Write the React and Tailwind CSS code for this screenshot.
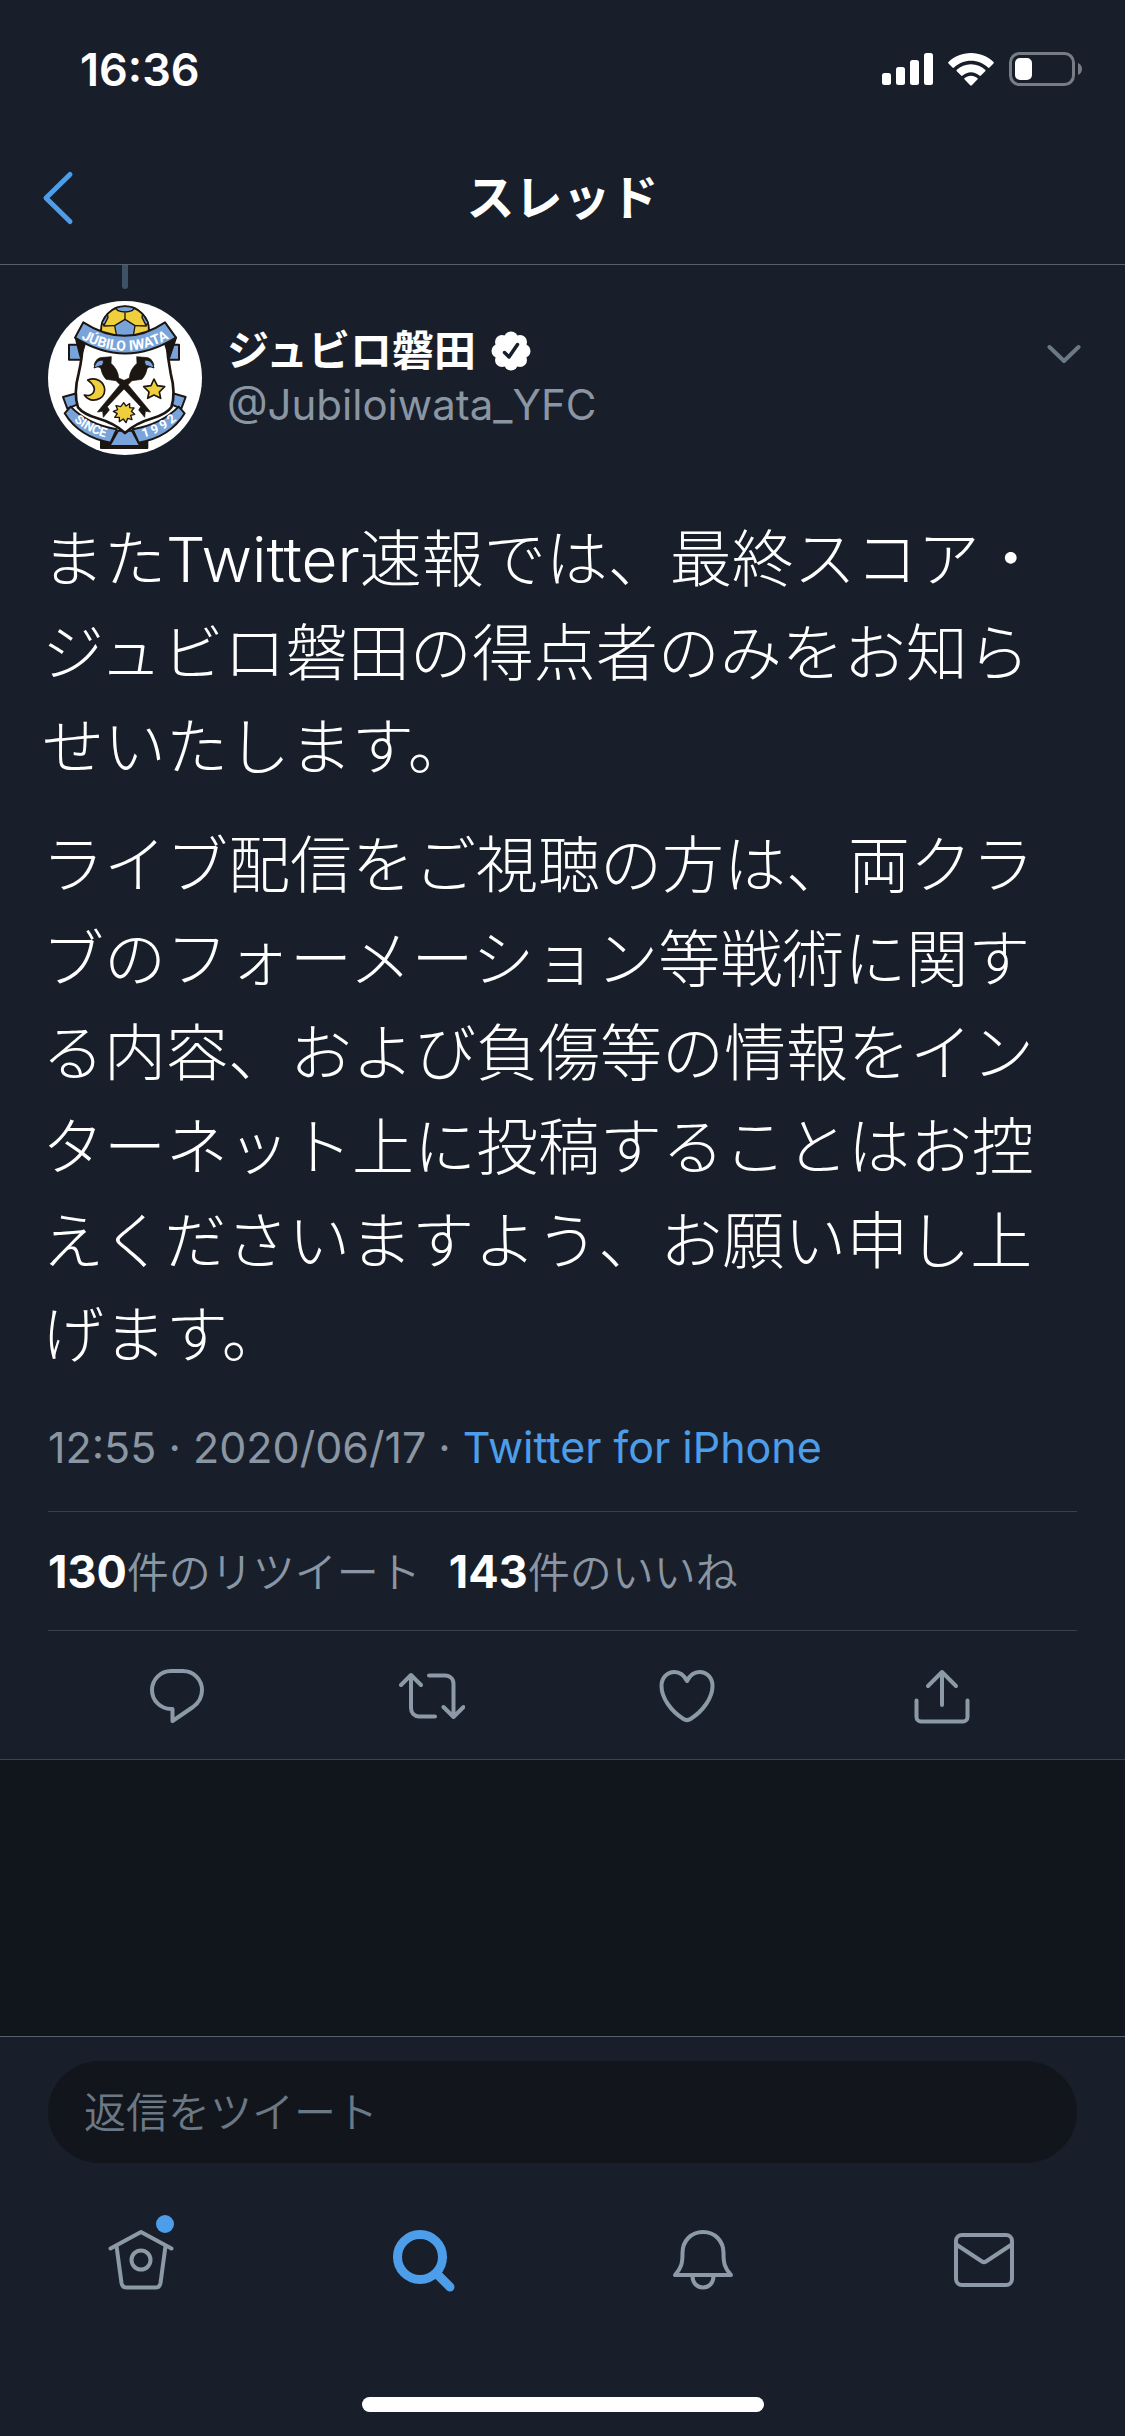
import React, { useState } from "react";

const paragraphs = [
  "またTwitter速報では、最終スコア・ジュビロ磐田の得点者のみをお知らせいたします。",
  "ライブ配信をご視聴の方は、両クラブのフォーメーション等戦術に関する内容、および負傷等の情報をインターネット上に投稿することはお控えくださいますよう、お願い申し上げます。",
];

const StatusBar = () => (
  <div className="flex h-[132px] items-center justify-between pl-20 pr-[42px] pt-1.5">
    <span className="text-[45px] font-semibold leading-none text-white">
      16:36
    </span>
    <div className="flex items-center gap-[15px]">
      <svg width="51" height="32" viewBox="0 0 51 32" fill="#fff">
        <rect x="0" y="20" width="9" height="12" rx="2.5" />
        <rect x="14" y="14" width="9" height="18" rx="2.5" />
        <rect x="28" y="7" width="9" height="25" rx="2.5" />
        <rect x="42" y="0" width="9" height="32" rx="2.5" />
      </svg>
      <svg width="46" height="33" viewBox="0 0 46 33" fill="#fff">
        <path d="M23 0C14 0 6 3.500 0.500 9c-.5.5-.5 1 0 1.500l4 4c.5.500 1 .500 1.500 0C10.500 10.200 16.500 7.700 23 7.700s12.500 2.500 17 6.800c.5.500 1 .500 1.500 0l4-4c.5-.500.5-1 0-1.500C40 3.500 32 0 23 0z" />
        <path d="M23 11.200c-5.500 0-10.500 2.100-14.200 5.600-.5.500-.5 1 0 1.500l4.300 4.300c.5.500 1 .500 1.500 0 2.300-2.100 5.200-3.400 8.400-3.400s6.100 1.300 8.400 3.400c.5.500 1 .500 1.500 0l4.300-4.300c.5-.500.5-1 0-1.500-3.700-3.500-8.700-5.600-14.200-5.600z" />
        <path d="M23 22.700c-2.500 0-4.700.9-6.400 2.400-.5.500-.5 1 0 1.500l5.600 5.700c.5.500 1.100.500 1.600 0l5.600-5.700c.5-.5.5-1 0-1.500-1.700-1.500-3.900-2.400-6.400-2.400z" />
      </svg>
      <svg width="74" height="34" viewBox="0 0 74 34">
        <rect
          x="1.500"
          y="1.500"
          width="63"
          height="31"
          rx="9"
          fill="none"
          stroke="#787c84"
          strokeWidth="3"
        />
        <path d="M69 11v12c2.400-1 4-3.300 4-6s-1.600-5-4-6z" fill="#787c84" />
        <rect x="6" y="6" width="17" height="22" rx="5" fill="#fff" />
      </svg>
    </div>
  </div>
);

const Crest = () => (
  <svg
    className="size-[154px] shrink-0 rounded-full bg-white"
    viewBox="54 123 462 462"
    role="img"
    aria-label="ジュビロ磐田"
    stroke="#1c1612"
    strokeWidth="6"
    strokeLinejoin="round"
  >
    <defs>
      <path id="crest-top" d="M140 228 Q285 315 430 228" />
      <path id="crest-since" d="M114 464 Q160 519 250 538" />
      <path id="crest-year" d="M318 538 Q408 519 456 464" />
    </defs>
    {/* ball */}
    <circle cx="285" cy="211" r="72" fill="#efcf3c" />
    <path d="M256 144Q285 134 314 144L306 152Q285 160 264 152z" fill="#79a4db" strokeWidth="4" />
    <path d="M285 178L315 197L308 240H262L254 197z" fill="#79a4db" strokeWidth="4" />
    <path d="M232 162L216 188L222 196L234 172z" fill="#79a4db" strokeWidth="4" />
    <path d="M338 162L354 188L348 196L336 172z" fill="#79a4db" strokeWidth="4" />
    <path d="M285 158V178M254 197L220 198M315 197L350 198" fill="none" strokeWidth="4" />
    {/* side tabs */}
    <path d="M117 254H160V299H117z" fill="#79a4db" />
    <path d="M410 254H447V299H410z" fill="#79a4db" />
    <path d="M99 411L140 400L150 430L112 446z" fill="#79a4db" />
    <path d="M467 411L428 400L416 430L454 446z" fill="#79a4db" />
    {/* foot */}
    <path d="M213 530H352V564H213z" fill="#1c1612" />
    <path d="M264 512H306L331 558H238z" fill="#79a4db" />
    {/* shield */}
    <path
      d="M158 240Q158 290 146 340Q130 400 144 442Q160 462 200 474Q255 490 285 519Q315 490 370 474Q410 462 424 442Q438 400 422 340Q412 290 410 240z"
      fill="#fff"
      strokeWidth="8"
    />
    <path d="M137 233L164 254L152 292z" fill="#1c1612" />
    <path d="M438 233L406 254L418 292z" fill="#1c1612" />
    {/* top ribbon */}
    <path d="M160 187Q285 268 405 187L438 233Q285 328 135 233z" fill="#79a4db" />
    {/* bottom ribbons */}
    <path d="M122 440Q172 492 260 508L242 548Q148 532 104 460z" fill="#79a4db" />
    <path d="M446 440Q396 492 308 508L326 548Q420 532 464 460z" fill="#79a4db" />
    {/* moon */}
    <path
      d="M173 360C200 350 224 366 224 391C224 420 182 432 163 405C190 412 209 386 173 360z"
      fill="#efcf3c"
      strokeWidth="5"
    />
    {/* star */}
    <path
      d="M372 357L382 377L404 380L388 396L392 415L372 405L353 415L357 396L341 380L363 377z"
      fill="#efcf3c"
      strokeWidth="5"
    />
    {/* birds */}
    <g id="bird">
      <path
        d="M192 316Q198 290 222 292L244 290L243 310Q264 328 266 354L284 362L362 456L346 454L344 472L326 450L332 440L268 372L258 362L228 358Q216 346 212 324z"
        fill="#1c1612"
        strokeWidth="2"
      />
      <path d="M192 324Q198 298 220 300Q222 318 209 318z" fill="#79a4db" strokeWidth="3" />
    </g>
    <use href="#bird" transform="translate(564 0) scale(-1 1)" />
    {/* sun */}
    <path
      d="M281 428L288 438L299 431L299 443L312 444L304 454L314 463L302 466L306 479L293 475L288 488L280 477L268 485L268 472L254 472L262 461L250 454L263 449L258 437L272 440z"
      fill="#efcf3c"
      strokeWidth="4"
    />
    <g
      fill="#fff"
      stroke="none"
      fontFamily="Roboto, sans-serif"
      fontWeight="700"
      textAnchor="middle"
    >
      <text fontSize="42">
        <textPath href="#crest-top" startOffset="50%">
          JÚBILO IWATA
        </textPath>
      </text>
      <text fontSize="38">
        <textPath href="#crest-since" startOffset="50%">
          SINCE
        </textPath>
      </text>
      <text fontSize="38">
        <textPath href="#crest-year" startOffset="50%">
          1 9 9 2
        </textPath>
      </text>
    </g>
  </svg>
);

const VerifiedBadge = () => (
  <svg width="40" height="40" viewBox="0 0 40 40" aria-label="認証済み">
    <g fill="#fff">
      <circle cx="20" cy="20" r="15" />
      <circle cx="20" cy="7.500" r="7" />
      <circle cx="20" cy="32.500" r="7" />
      <circle cx="7.500" cy="20" r="7" />
      <circle cx="32.500" cy="20" r="7" />
      <circle cx="11" cy="11" r="7" />
      <circle cx="29" cy="11" r="7" />
      <circle cx="11" cy="29" r="7" />
      <circle cx="29" cy="29" r="7" />
    </g>
    <path
      d="M13.500 21.500L18 26L26.500 13.500"
      fill="none"
      stroke="#191f2a"
      strokeWidth="3.500"
      strokeLinecap="round"
      strokeLinejoin="round"
    />
  </svg>
);

const LineIcon = ({ children }) => (
  <svg
    width="66"
    height="66"
    viewBox="0 0 66 66"
    fill="none"
    stroke="#8c99a6"
    strokeWidth="4"
    strokeLinecap="round"
    strokeLinejoin="round"
  >
    {children}
  </svg>
);

const actions = [
  {
    label: "返信",
    icon: (
      <path d="M27 8H39C49.500 8 58 16.500 58 27C58 34 54.500 40 49 44L28.500 58V46H27C16.500 46 8 37.500 8 27C8 16.500 16.500 8 27 8z" />
    ),
  },
  {
    label: "リツイート",
    icon: (
      <path d="M2 22L12 12L22 22M12 12V45C12 50 15.500 53.500 20 53.500H36M30 12.500H46C51 12.500 54.500 16 54.500 21V54M44.500 44L54.500 54L64.500 44" />
    ),
  },
  {
    label: "いいね",
    icon: (
      <path d="M33 18C30 12 26 9 20.500 9C12.500 9 7.500 15.500 7.500 23C7.500 35 17 48 29.500 56C32 57.600 34 57.600 36.500 56C49 48 58.500 35 58.500 23C58.500 15.500 53.500 9 45.500 9C40 9 36 12 33 18z" />
    ),
  },
  {
    label: "共有",
    icon: (
      <path d="M19 23L33 9L47 23M33 9V42M7.500 37.500V54C7.500 56.500 9.500 58.500 12 58.500H54C56.500 58.500 58.500 56.500 58.500 54V37.500" />
    ),
  },
];

const tabs = [
  {
    label: "ホーム",
    badge: true,
    icon: (
      <LineIcon>
        <path d="M2.500 21.500L33 5L63.500 21.500M8.500 19L13.500 56C14 59 15.500 60.500 18.500 60.500H47.500C50.500 60.500 52 59 52.500 56L57.500 19" />
        <circle cx="33" cy="33" r="9.500" />
      </LineIcon>
    ),
  },
  {
    label: "検索",
    icon: (
      <svg
        width="66"
        height="66"
        viewBox="0 0 66 66"
        fill="none"
        stroke="#4c9eeb"
        strokeWidth="9"
        strokeLinecap="round"
      >
        <circle cx="31" cy="30" r="22.500" />
        <path d="M47.500 46.500L61 60" />
      </svg>
    ),
  },
  {
    label: "通知",
    icon: (
      <LineIcon>
        <path d="M33 5C21 5 12.500 14 12.500 26C12.500 36 11.500 41 5 48H61C54.500 41 53.500 36 53.500 26C53.500 14 45 5 33 5zM22.500 49C22.500 56 27 60.500 33 60.500S43.500 56 43.500 49" />
      </LineIcon>
    ),
  },
  {
    label: "メッセージ",
    icon: (
      <LineIcon>
        <rect x="5" y="8" width="56" height="50" rx="6" />
        <path d="M6 18L31 34.500Q33 35.800 35 34.500L60 18" />
      </LineIcon>
    ),
  },
];

const App = () => {
  const [reply, setReply] = useState("");

  return (
    <div className="flex min-h-screen flex-col bg-[#191f2a] font-['Inter','Noto_Sans_CJK_JP',sans-serif] text-white">
      <header className="border-b border-[#56636e]">
        <StatusBar />
        <div className="grid h-[132px] grid-cols-3 items-center px-10">
          <button type="button" aria-label="戻る" className="justify-self-start">
            <svg
              width="36"
              height="56"
              viewBox="0 0 36 56"
              fill="none"
              stroke="#4c9eeb"
              strokeWidth="5"
              strokeLinecap="round"
              strokeLinejoin="round"
            >
              <path d="M30 4.500L6 28L30 51.500" />
            </svg>
          </button>
          <h1 className="text-center text-[48px] font-bold leading-none">
            スレッド
          </h1>
        </div>
      </header>

      <main className="flex flex-1 flex-col bg-[#11151c]">
        <article className="border-b border-[#38444d] bg-[#191f2a]">
          <div className="flex w-[250px] justify-center">
            <span className="h-6 w-1.5 rounded-b-full bg-[#3d5264]" />
          </div>
          <div className="flex items-start gap-[25px] pl-12 pr-11 pt-3">
            <Crest />
            <div className="flex flex-1 flex-col pt-5">
              <div className="flex h-[60px] items-center gap-[15px]">
                <span className="text-[42px] font-bold leading-none">
                  ジュビロ磐田
                </span>
                <VerifiedBadge />
              </div>
              <span className="text-[42px] leading-[48px] text-[#8a96a3]">
                @Jubiloiwata_YFC
              </span>
            </div>
            <button type="button" aria-label="メニュー" className="pt-10">
              <svg
                width="34"
                height="26"
                viewBox="0 0 34 26"
                fill="none"
                stroke="#6b7886"
                strokeWidth="4"
                strokeLinecap="round"
                strokeLinejoin="round"
              >
                <path d="M2.500 6L17 20L31.500 6" />
              </svg>
            </button>
          </div>

          <div className="flex flex-col gap-6 px-[42px] pt-[58px] text-[62px] font-light leading-[94px]">
            {paragraphs.map((text, index) => (
              <p key={index}>{text}</p>
            ))}
          </div>

          <div className="px-12">
            <p className="pb-9 pt-9 text-[43px] leading-[56px] text-[#8a96a3]">
              12:55 · 2020/06/17 ·{" "}
              <a href="#source" className="text-[#4c9eeb]">
                Twitter for iPhone
              </a>
            </p>
            <div className="flex h-[120px] items-center gap-7 border-y border-[#38404b] text-[42px] leading-none text-[#8a96a3]">
              <a href="#retweets">
                <b className="text-[45px] font-bold text-white">130</b>
                <span className="font-[350]">件のリツイート</span>
              </a>
              <a href="#likes">
                <b className="text-[45px] font-bold text-white">143</b>
                <span className="font-[350]">件のいいね</span>
              </a>
            </div>
          </div>

          <div className="grid h-32 grid-cols-4 items-center pl-[49px] pr-[56px] pt-0.5">
            {actions.map((action) => (
              <button
                key={action.label}
                type="button"
                aria-label={action.label}
                className="justify-self-center"
              >
                <LineIcon>{action.icon}</LineIcon>
              </button>
            ))}
          </div>
        </article>
      </main>

      <footer className="border-t border-[#56636e] pt-6">
        <div className="px-12">
          <input
            type="text"
            aria-label="返信をツイート"
            placeholder="返信をツイート"
            value={reply}
            onChange={(e) => setReply(e.target.value)}
            className="h-[102px] w-full rounded-full bg-[#12161c] px-9 text-[42px] font-[350] text-white outline-none placeholder:text-[#6b7886]"
          />
        </div>
        <nav className="grid grid-cols-4 pt-16">
          {tabs.map((tab) => (
            <button
              key={tab.label}
              type="button"
              aria-label={tab.label}
              className="relative justify-self-center"
            >
              {tab.icon}
              {tab.badge && (
                <span className="absolute -top-3 right-0 size-[18px] rounded-full bg-[#4c9eeb]" />
              )}
            </button>
          ))}
        </nav>
        <div className="flex justify-center pb-6 pt-[104px]">
          <div className="h-[15px] w-[402px] rounded-full bg-white" />
        </div>
      </footer>
    </div>
  );
};

export default App;
